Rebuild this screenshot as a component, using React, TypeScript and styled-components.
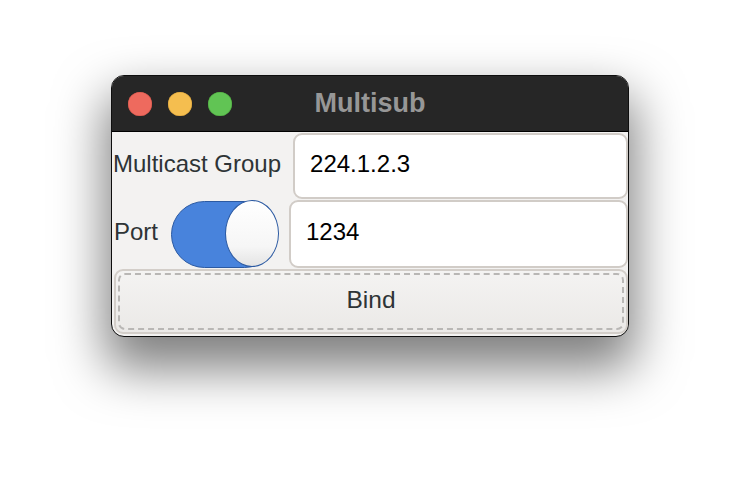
import React from 'react'
import styled, { createGlobalStyle } from 'styled-components'

const GlobalStyle = createGlobalStyle`
  html, body {
    margin: 0;
    padding: 0;
    background: #ffffff;
  }
  body {
    font-family: 'Liberation Sans', Arial, Helvetica, sans-serif;
  }
`

const Stage = styled.div`
  width: 740px;
  height: 484px;
  padding: 75px 0 0 111px;
  box-sizing: border-box;
`

const Window = styled.div`
  width: 518px;
  height: 262px;
  box-sizing: border-box;
  border: 1px solid #0e0e0e;
  border-radius: 13px;
  overflow: hidden;
  background: #f3f2f1;
  box-shadow: 0 26px 50px 6px rgba(0, 0, 0, 0.5);
  display: flex;
  flex-direction: column;
`

const TitleBar = styled.div`
  height: 55px;
  flex: none;
  background: #262626;
  border-bottom: 1px solid #000;
  position: relative;
  display: flex;
  align-items: center;
  padding-left: 16px;
  gap: 16px;
`

const Light = styled.span<{ $color: string; $edge: string }>`
  width: 24px;
  height: 24px;
  border-radius: 50%;
  background: ${({ $color }) => $color};
  box-shadow: inset 0 0 0 0.5px ${({ $edge }) => $edge};
`

const Title = styled.div`
  position: absolute;
  inset: 0;
  display: flex;
  align-items: center;
  justify-content: center;
  font-size: 27px;
  font-weight: bold;
  color: #979797;
  pointer-events: none;
`

const Content = styled.div`
  flex: 1;
  display: flex;
  flex-direction: column;
  gap: 1px;
  padding: 1px 0 2px 1px;
`

const Row = styled.div<{ $height: number }>`
  display: flex;
  align-items: center;
  height: ${({ $height }) => $height}px;
  flex: none;
`

const Label = styled.span<{ $indent?: number; $gap: number }>`
  font-size: 24px;
  color: #2e3436;
  padding-bottom: 4px;
  margin-left: ${({ $indent }) => $indent ?? 0}px;
  margin-right: ${({ $gap }) => $gap}px;
  white-space: nowrap;
`

const Entry = styled.div`
  flex: 1;
  align-self: stretch;
  box-sizing: border-box;
  background: #ffffff;
  border: 2px solid #d1ccc7;
  border-radius: 9px;
  display: flex;
  align-items: center;
  padding: 0 0 4px 15px;
  font-size: 24px;
  color: #000;
`

const Track = styled.div`
  width: 107px;
  height: 67px;
  box-sizing: border-box;
  border: 1.5px solid #2c5aa2;
  border-radius: 34px;
  background: #4883dc;
  display: flex;
  justify-content: flex-end;
  margin-right: 11px;
`

const Knob = styled.div`
  width: 54px;
  height: 67px;
  box-sizing: border-box;
  margin-right: -1.5px;
  margin-top: -1.5px;
  border: 1.5px solid #2c5aa2;
  border-radius: 50%;
  background: linear-gradient(to bottom, #ffffff 0%, #f6f6f6 70%, #e4e4e4 100%);
`

const BindButton = styled.button`
  flex: 1;
  margin: 0 0 0 1px;
  box-sizing: border-box;
  border: 2px solid #d3cec9;
  border-radius: 9px;
  background: linear-gradient(to bottom, #f4f3f2, #ebe9e7);
  padding: 2px;
  font-family: inherit;
  display: flex;
`

const FocusRing = styled.span`
  flex: 1;
  border: 2px dashed #b9b7b5;
  border-radius: 7px;
  display: flex;
  align-items: center;
  justify-content: center;
  padding-bottom: 4px;
  font-size: 24.5px;
  color: #2e3436;
`

export default function App() {
  return (
    <Stage>
      <GlobalStyle />
      <Window>
        <TitleBar>
          <Light $color="#ee6a5e" $edge="#d4554a" />
          <Light $color="#f5be4f" $edge="#d9a23a" />
          <Light $color="#61c454" $edge="#4ea83f" />
          <Title>Multisub</Title>
        </TitleBar>
        <Content>
          <Row $height={66}>
            <Label $gap={12}>Multicast Group</Label>
            <Entry>224.1.2.3</Entry>
          </Row>
          <Row $height={68}>
            <Label $indent={1} $gap={13}>Port</Label>
            <Track>
              <Knob />
            </Track>
            <Entry>1234</Entry>
          </Row>
          <BindButton>
            <FocusRing>Bind</FocusRing>
          </BindButton>
        </Content>
      </Window>
    </Stage>
  )
}
